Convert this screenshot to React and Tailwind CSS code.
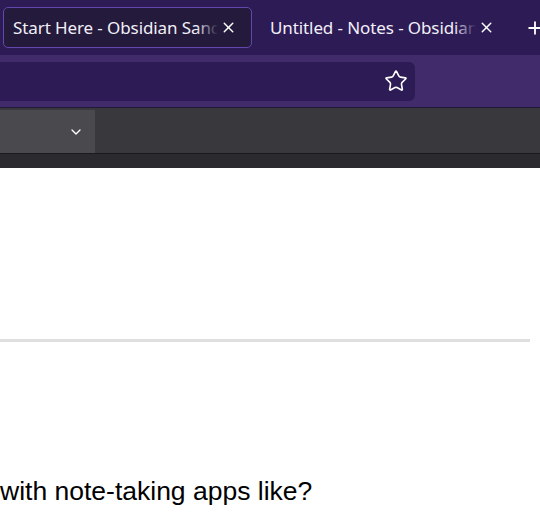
import { Star, ChevronDown, X, Plus } from 'lucide-react';

const Tab = ({ title, active, bg }) => (
  <div
    className={`relative flex h-[41px] shrink-0 items-center rounded-[5px] pl-[9px] pr-[14px] ${
      active ? 'w-[249px] border border-[#6447ad] bg-[#231a3c]' : 'w-[250px] border border-transparent'
    }`}
  >
    <div className="relative min-w-0 flex-1 overflow-hidden whitespace-nowrap text-[17px] tracking-[-0.1px] text-[#f2eff8]">
      {title}
      <span className={`absolute inset-y-0 right-0 w-[22px] bg-gradient-to-r from-transparent ${bg}`} />
    </div>
    <X className="ml-[2px] h-[17px] w-[17px] shrink-0 text-white" strokeWidth={2} />
  </div>
);

export default function App() {
  return (
    <div className="h-[515px] w-[540px] overflow-hidden bg-white" style={{ fontFamily: '"Noto Sans", "Open Sans", sans-serif' }}>
      {/* tab strip */}
      <div className="flex h-[55px] items-start gap-[8px] bg-[#2d1b55] pl-[3px] pt-[7px]">
        <Tab title="Start Here - Obsidian Sandbox" active bg="to-[#231a3c]" />
        <Tab title="Untitled - Notes - Obsidian" bg="to-[#2d1b55]" />
        <div className="flex h-[41px] items-center pl-[7px]">
          <Plus className="h-[20px] w-[20px] text-white" strokeWidth={2.2} />
        </div>
      </div>

      {/* toolbar */}
      <div className="flex h-[53px] items-center bg-[#412b6a] border-b border-[#24183a]">
        <div className="-ml-[10px] flex h-[39px] w-[425px] items-center justify-end rounded-[6px] bg-[#2d1b55] pr-[7px]">
          <Star className="h-[24px] w-[24px] text-white" strokeWidth={1.6} />
        </div>
      </div>

      {/* app header */}
      <div className="flex h-[46px] items-end bg-[#39383d] border-b border-[#1b1b1e]">
        <div className="flex h-[43px] w-[95px] items-center justify-end bg-[#4a494e] pr-[11px]">
          <ChevronDown className="h-[16px] w-[16px] text-white" strokeWidth={2} />
        </div>
      </div>
      <div className="h-[14px] bg-[#2b2a2f]" />

      {/* page */}
      <div className="h-[171px]" />
      <div className="h-[3px] w-[530px] bg-[#dfdfdf]" />
      <div className="h-[134px]" />
      <p className="text-[26.5px] leading-[30px] text-black" style={{ fontFamily: '"Liberation Sans", Arial, sans-serif' }}>
        with note-taking apps like?
      </p>
    </div>
  );
}
